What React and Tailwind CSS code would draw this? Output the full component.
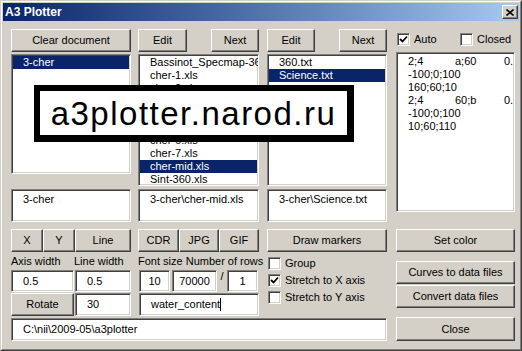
const raised =
  "bg-[#d4d0c8] border border-t-white border-l-white border-b-[#404040] border-r-[#404040] shadow-[inset_-1px_-1px_0_#808080] flex items-center justify-center text-black";
const sunken =
  "bg-white border border-t-[#808080] border-l-[#808080] border-b-white border-r-white shadow-[inset_1px_1px_0_#404040,inset_-1px_-1px_0_#d4d0c8]";

function Btn({ className = "", children }) {
  return <div className={`${raised} h-[23px] ${className}`}>{children}</div>;
}

function Box({ className = "", children }) {
  return <div className={`${sunken} overflow-hidden ${className}`}>{children}</div>;
}

function Check({ checked, label, className = "" }) {
  return (
    <div className={`flex items-center h-[17px] ${className}`}>
      <div className={`${sunken} w-[13px] h-[13px] flex items-center justify-center`}>
        {checked && (
          <svg width="9" height="9" viewBox="0 0 9 9">
            <path d="M1 4 L3.5 6.5 L8 1.5" stroke="#000" strokeWidth="1.8" fill="none" />
          </svg>
        )}
      </div>
      <span className="ml-[4px] whitespace-nowrap">{label}</span>
    </div>
  );
}

function ListItem({ children, selected }) {
  return (
    <div
      className={`h-[13px] leading-[13px] pl-[10px] whitespace-nowrap ${
        selected ? "bg-[#0a246a] text-white" : ""
      }`}
    >
      {children}
    </div>
  );
}

const midFiles = [
  "Bassinot_Specmap-36",
  "cher-1.xls",
  "cher-2.xls",
  "cher-3.xls",
  "cher-4.xls",
  "cher-5.xls",
  "cher-6.xls",
  "cher-7.xls",
  "cher-mid.xls",
  "Sint-360.xls",
];

const dataLines = [
  ["2;4", "a;60", "0."],
  ["-100;0;100"],
  ["160;60;10"],
  ["2;4", "60;b", "0."],
  ["-100;0;100"],
  ["10;60;110"],
];

export default function App() {
  return (
    <div
      className="w-[522px] h-[351px] border border-t-[#d4d0c8] border-l-[#d4d0c8] border-b-[#404040] border-r-[#404040] bg-[#d4d0c8] text-[11px] text-black"
      style={{ fontFamily: '"Liberation Sans", Arial, sans-serif' }}
    >
      <div className="h-full border border-t-white border-l-white border-b-[#808080] border-r-[#808080] p-px flex flex-col">
        {/* title bar */}
        <div className="h-[18px] flex items-start justify-between bg-gradient-to-r from-[#0a246a] to-[#a6caf0]">
          <span className="pl-[2px] text-[12px] font-bold text-white leading-[18px]">A3 Plotter</span>
          <div className={`${raised} w-[16px] h-[14px] mt-[2px] mr-[1px]`}>
            <svg width="8" height="7" viewBox="0 0 8 7">
              <path d="M0.5 0.5 L7.5 6.5 M7.5 0.5 L0.5 6.5" stroke="#000" strokeWidth="1.6" />
            </svg>
          </div>
        </div>

        {/* content */}
        <div className="relative flex-1 flex pl-[8px] pt-[8px]">
          <div className="w-[376px] flex flex-col">
            <div className="flex h-[287px]">
              {/* column 1 */}
              <div className="w-[120px] flex flex-col">
                <Btn>Clear document</Btn>
                <Box className="mt-[2px] h-[120px] pt-px px-px">
                  <ListItem selected>3-cher</ListItem>
                </Box>
                <Box className="mt-[15px] h-[33px] pl-[11px] pt-[3px] leading-[13px]">3-cher</Box>
                <div className="mt-[7px] flex">
                  <Btn className="w-[32px]">X</Btn>
                  <Btn className="w-[32px]">Y</Btn>
                  <Btn className="w-[56px]">Line</Btn>
                </div>
                <div className="h-[18px] flex items-center whitespace-nowrap">
                  <span className="w-[63px]">Axis width</span>
                  <span>Line width</span>
                </div>
                <div className="flex gap-px">
                  <Box className="w-[63px] h-[22px] pl-[11px] flex items-center">0.5</Box>
                  <Box className="w-[56px] h-[22px] pl-[11px] flex items-center">0.5</Box>
                </div>
                <div className="mt-px flex gap-px">
                  <Btn className="w-[63px]">Rotate</Btn>
                  <Box className="w-[56px] h-[23px] pl-[11px] flex items-center">30</Box>
                </div>
              </div>

              {/* column 2 */}
              <div className="ml-[7px] w-[121px] flex flex-col">
                <div className="flex justify-between">
                  <Btn className="w-[49px]">Edit</Btn>
                  <Btn className="w-[48px]">Next</Btn>
                </div>
                <Box className="mt-[2px] h-[132px] pt-px px-px">
                  {midFiles.map((f) => (
                    <ListItem key={f} selected={f === "cher-mid.xls"}>
                      {f}
                    </ListItem>
                  ))}
                </Box>
                <Box className="mt-[3px] h-[33px] pl-[11px] pt-[3px] leading-[13px] whitespace-nowrap">
                  3-cher\cher-mid.xls
                </Box>
                <div className="mt-[7px] flex">
                  <Btn className="w-[41px]">CDR</Btn>
                  <Btn className="w-[40px]">JPG</Btn>
                  <Btn className="w-[40px]">GIF</Btn>
                </div>
                <div className="h-[18px] flex items-center whitespace-nowrap">Font size Number of rows</div>
                <div className="flex pl-px">
                  <Box className="w-[31px] h-[22px] flex items-center justify-center">10</Box>
                  <Box className="ml-[2px] w-[45px] h-[22px] flex items-center justify-center">70000</Box>
                  <span className="w-[10px] text-center leading-[10px] pt-px">/</span>
                  <Box className="w-[31px] h-[22px] flex items-center justify-center">1</Box>
                </div>
                <Box className="mt-px ml-px w-[120px] h-[23px] pl-[11px] flex items-center">
                  water_content
                  <span className="inline-block w-px h-[13px] bg-black" />
                </Box>
              </div>

              {/* column 3 */}
              <div className="ml-[8px] w-[120px] flex flex-col">
                <div className="flex justify-between">
                  <Btn className="w-[48px]">Edit</Btn>
                  <Btn className="w-[48px]">Next</Btn>
                </div>
                <Box className="mt-[2px] h-[132px] pt-px px-px">
                  <ListItem>360.txt</ListItem>
                  <ListItem selected>Science.txt</ListItem>
                </Box>
                <Box className="mt-[3px] h-[33px] pl-[11px] pt-[3px] leading-[13px] whitespace-nowrap">
                  3-cher\Science.txt
                </Box>
                <Btn className="mt-[7px]">Draw markers</Btn>
                <div className="pt-[3px] pl-px flex flex-col">
                  <Check label="Group" />
                  <Check checked label="Stretch to X axis" />
                  <Check label="Stretch to Y axis" />
                </div>
              </div>
            </div>
            <Box className="mt-[2px] h-[23px] pl-[11px] flex items-center">C:\nii\2009-05\a3plotter</Box>
          </div>

          {/* right column */}
          <div className="ml-[9px] w-[119px] flex flex-col">
            <div className="h-[23px] flex items-start pt-[2px] pl-px">
              <Check checked label="Auto" className="w-[63px]" />
              <Check label="Closed" />
            </div>
            <Box className="h-[160px] pt-[2px] pl-[11px]">
              {dataLines.map((l, i) => (
                <div key={i} className="h-[13px] leading-[13px] flex whitespace-nowrap">
                  <span className="w-[47px] shrink-0">{l[0]}</span>
                  {l[1] && <span className="w-[49px] shrink-0">{l[1]}</span>}
                  {l[2] && <span>{l[2]}</span>}
                </div>
              ))}
            </Box>
            <Btn className="mt-[17px]">Set color</Btn>
            <Btn className="mt-[9px]">Curves to data files</Btn>
            <Btn className="mt-px">Convert data files</Btn>
            <Btn className="mt-[9px] h-[24px]">Close</Btn>
          </div>

          {/* site banner over the window */}
          <div className="absolute left-[31px] top-[64px] w-[320px] h-[57px] bg-white border-[6px] border-r-[7px] border-b-[7px] border-black flex items-center justify-center">
            <span className="text-[33px] tracking-[1.5px] leading-none">a3plotter.narod.ru</span>
          </div>
        </div>
      </div>
    </div>
  );
}
